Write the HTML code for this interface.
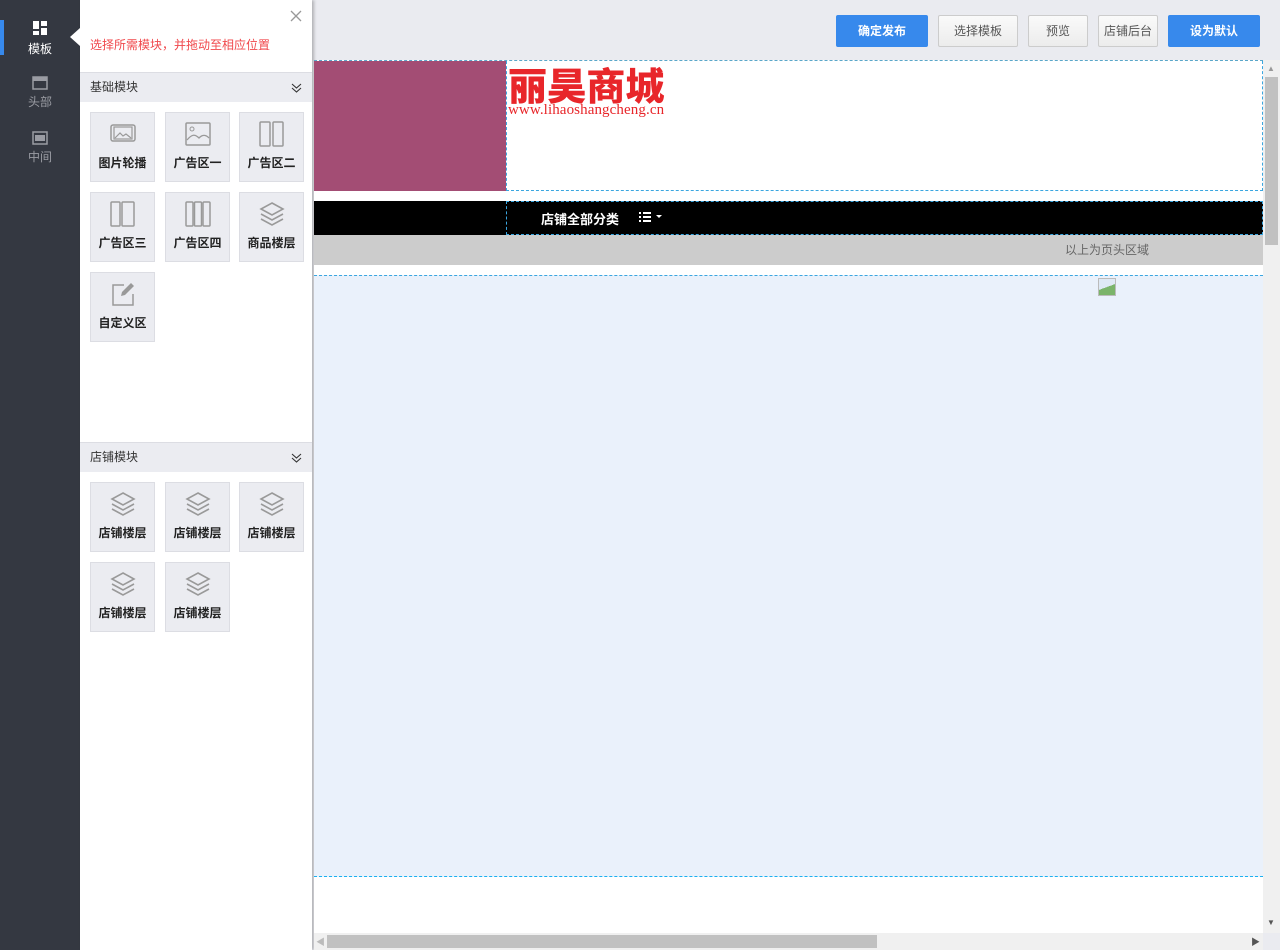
<!DOCTYPE html>
<html><head><meta charset="utf-8"><style>
*{margin:0;padding:0;box-sizing:border-box}
body{width:1280px;height:950px;overflow:hidden;position:relative;background:#eaebf0;font-family:"Liberation Sans","Noto Sans CJK SC",sans-serif;font-size:12px}
.abs{position:absolute}
#side{left:0;top:0;width:80px;height:950px;background:#343841}
.nav{position:absolute;left:0;width:80px;text-align:center;color:#9a9ca3;font-size:12px}
#panel{left:80px;top:0;width:232px;height:950px;background:#fff;box-shadow:2px 0 3px rgba(0,0,0,.25)}
.sh{position:absolute;left:0;width:232px;height:30px;background:#ebecf1;border-top:1px solid #dcdde3;line-height:29px;padding-left:10px;color:#333;font-size:12px}
.chev{position:absolute;right:10px;top:9px}
.tile{position:absolute;width:65px;height:70px;background:#ebecf1;border:1px solid #dcdde3;text-align:center;font-weight:bold;color:#222;font-size:12px}
.tile svg{position:absolute;left:18px;top:8px}
.tile span{position:absolute;left:0;right:0;top:41px}
.btn{position:absolute;top:15px;height:32px;line-height:30px;text-align:center;border-radius:2px;font-size:12px}
.blue{background:#3789ec;color:#fff;border:1px solid #3789ec;font-weight:bold}
.gray{background:linear-gradient(#fafafa,#ececec);border:1px solid #ccc;color:#555}
</style></head><body>
<div id="side" class="abs">
 <div class="abs" style="left:0;top:20px;width:4px;height:35px;background:#3789ec"></div>
 <div class="nav" style="top:20px;color:#fff"><svg width="16" height="16" viewBox="0 0 16 16" style="display:block;margin:0 auto 4px"><rect x="1" y="1" width="6" height="8" fill="#fff"/><rect x="9" y="1" width="6" height="5" fill="#fff"/><rect x="1" y="11" width="6" height="4" fill="#fff"/><rect x="9" y="8" width="6" height="7" fill="#fff"/></svg>模板</div>
 <div class="nav" style="top:76px"><svg width="16" height="14" viewBox="0 0 16 14" style="display:block;margin:0 auto 3px"><rect x="1" y="1" width="14" height="12" fill="none" stroke="#9a9ca3" stroke-width="1.5"/><rect x="1" y="1" width="14" height="4" fill="#9a9ca3"/></svg>头部</div>
 <div class="nav" style="top:131px"><svg width="16" height="14" viewBox="0 0 16 14" style="display:block;margin:0 auto 3px"><rect x="1" y="1" width="14" height="12" fill="none" stroke="#9a9ca3" stroke-width="1.5"/><rect x="3" y="4" width="10" height="6" fill="#9a9ca3"/></svg>中间</div>
</div>
<div id="panel" class="abs">
 <div class="abs" style="left:-10px;top:28px;width:0;height:0;border-top:9px solid transparent;border-bottom:9px solid transparent;border-right:10px solid #fff"></div>
 <svg class="abs" style="left:210px;top:10px" width="12" height="12" viewBox="0 0 12 12"><path d="M1 1L11 11M11 1L1 11" stroke="#999" stroke-width="1.3"/></svg>
 <div class="abs" style="left:10px;top:36px;color:#f0484c;font-size:12px">选择所需模块，并拖动至相应位置</div>
 <div class="sh" style="top:72px">基础模块<svg class="chev" width="11" height="12" viewBox="0 0 11 12"><path d="M1 2l4.5 4 4.5-4M1 6l4.5 4 4.5-4" fill="none" stroke="#333" stroke-width="1.1"/></svg></div>
 <div class="tile" style="left:10px;top:112px"><svg width="28" height="24" viewBox="0 0 28 24"><rect x="2" y="4" width="24" height="16" rx="2" fill="none" stroke="#999" stroke-width="1.5"/><rect x="5" y="6" width="18" height="12" fill="none" stroke="#999" stroke-width="1.2"/><path d="M6 17l5-5 3 3 3-2 5 4" fill="none" stroke="#999" stroke-width="1.2"/></svg><span>图片轮播</span></div>
 <div class="tile" style="left:85px;top:112px"><svg width="28" height="26" viewBox="0 0 28 26"><rect x="2" y="2" width="24" height="22" rx="1" fill="none" stroke="#999" stroke-width="1.5"/><circle cx="8" cy="8" r="2" fill="none" stroke="#999"/><path d="M3 19c5-6 8-6 12-2 4-4 7-3 10 0" fill="none" stroke="#999" stroke-width="1.3"/></svg><span>广告区一</span></div>
 <div class="tile" style="left:159px;top:112px"><svg width="28" height="26" viewBox="0 0 28 26"><rect x="2" y="1" width="10" height="24" rx="1" fill="none" stroke="#999" stroke-width="1.5"/><rect x="15" y="1" width="10" height="24" rx="1" fill="none" stroke="#999" stroke-width="1.5"/></svg><span>广告区二</span></div>
 <div class="tile" style="left:10px;top:192px"><svg width="28" height="26" viewBox="0 0 28 26"><rect x="2" y="1" width="9" height="24" rx="1" fill="none" stroke="#999" stroke-width="1.5"/><rect x="13" y="1" width="12" height="24" rx="1" fill="none" stroke="#999" stroke-width="1.5"/></svg><span>广告区三</span></div>
 <div class="tile" style="left:85px;top:192px"><svg width="28" height="26" viewBox="0 0 28 26"><rect x="2" y="1" width="7" height="24" rx="1" fill="none" stroke="#999" stroke-width="1.5"/><rect x="10.5" y="1" width="7" height="24" rx="1" fill="none" stroke="#999" stroke-width="1.5"/><rect x="19" y="1" width="7" height="24" rx="1" fill="none" stroke="#999" stroke-width="1.5"/></svg><span>广告区四</span></div>
 <div class="tile" style="left:159px;top:192px"><svg width="28" height="26" viewBox="0 0 28 26"><path d="M14 2L25 8 14 14 3 8z M3 13l11 6 11-6 M3 18l11 6 11-6" fill="none" stroke="#999" stroke-width="1.6"/></svg><span>商品楼层</span></div>
 <div class="tile" style="left:10px;top:272px"><svg width="28" height="26" viewBox="0 0 28 26"><path d="M15 4H4v20h20V13" fill="none" stroke="#999" stroke-width="1.5"/><path d="M22 2l3 3-9 9-4 1 1-4z" fill="#999"/></svg><span>自定义区</span></div>
 <div class="sh" style="top:442px">店铺模块<svg class="chev" width="11" height="12" viewBox="0 0 11 12"><path d="M1 2l4.5 4 4.5-4M1 6l4.5 4 4.5-4" fill="none" stroke="#333" stroke-width="1.1"/></svg></div>
 <div class="tile" style="left:10px;top:482px"><svg width="28" height="26" viewBox="0 0 28 26"><path d="M14 2L25 8 14 14 3 8z M3 13l11 6 11-6 M3 18l11 6 11-6" fill="none" stroke="#999" stroke-width="1.6"/></svg><span>店铺楼层</span></div>
 <div class="tile" style="left:85px;top:482px"><svg width="28" height="26" viewBox="0 0 28 26"><path d="M14 2L25 8 14 14 3 8z M3 13l11 6 11-6 M3 18l11 6 11-6" fill="none" stroke="#999" stroke-width="1.6"/></svg><span>店铺楼层</span></div>
 <div class="tile" style="left:159px;top:482px"><svg width="28" height="26" viewBox="0 0 28 26"><path d="M14 2L25 8 14 14 3 8z M3 13l11 6 11-6 M3 18l11 6 11-6" fill="none" stroke="#999" stroke-width="1.6"/></svg><span>店铺楼层</span></div>
 <div class="tile" style="left:10px;top:562px"><svg width="28" height="26" viewBox="0 0 28 26"><path d="M14 2L25 8 14 14 3 8z M3 13l11 6 11-6 M3 18l11 6 11-6" fill="none" stroke="#999" stroke-width="1.6"/></svg><span>店铺楼层</span></div>
 <div class="tile" style="left:85px;top:562px"><svg width="28" height="26" viewBox="0 0 28 26"><path d="M14 2L25 8 14 14 3 8z M3 13l11 6 11-6 M3 18l11 6 11-6" fill="none" stroke="#999" stroke-width="1.6"/></svg><span>店铺楼层</span></div>
</div>
<div class="btn blue" style="left:836px;width:92px">确定发布</div>
<div class="btn gray" style="left:938px;width:80px">选择模板</div>
<div class="btn gray" style="left:1028px;width:60px">预览</div>
<div class="btn gray" style="left:1098px;width:60px">店铺后台</div>
<div class="btn blue" style="left:1168px;width:92px">设为默认</div>
<div class="abs" style="left:314px;top:60px;width:949px;height:873px;background:#fff;border-top:1px dashed #5aa7c9"></div>
<div class="abs" style="left:314px;top:61px;width:192px;height:130px;background:#a34d74"></div>
<div class="abs" style="left:506px;top:61px;width:757px;height:130px;border:1px dashed #3aa6e0;border-top:none"></div>
<div class="abs" style="left:508px;top:60px;color:#e8262a;font-size:38px;font-weight:900;font-family:'Noto Sans CJK SC',sans-serif;line-height:48px;transform:scaleX(1.03);transform-origin:left">丽昊商城</div>
<div class="abs" style="left:508px;top:102px;color:#e8262a;font-size:15px;font-family:'Liberation Serif',serif;letter-spacing:0.1px">www.lihaoshangcheng.cn</div>
<div class="abs" style="left:314px;top:201px;width:949px;height:34px;background:#000"></div>
<div class="abs" style="left:506px;top:201px;width:757px;height:34px;border:1px dashed #3aa6e0"></div>
<div class="abs" style="left:541px;top:209px;color:#fff;font-size:13px;font-weight:bold">店铺全部分类</div>
<svg class="abs" style="left:639px;top:212px" width="24" height="11" viewBox="0 0 24 11"><g fill="#fff"><rect x="0" y="0" width="2" height="2"/><rect x="0" y="4" width="2" height="2"/><rect x="0" y="8" width="2" height="2"/><rect x="4" y="0" width="8" height="2"/><rect x="4" y="4" width="8" height="2"/><rect x="4" y="8" width="8" height="2"/><path d="M17 3h6l-3 3z"/></g></svg>
<div class="abs" style="left:314px;top:235px;width:949px;height:30px;background:#cccccc;color:#666;line-height:30px;padding-left:751px">以上为页头区域</div>
<div class="abs" style="left:314px;top:275px;width:949px;height:602px;background:#eaf1fb;border-top:1px dashed #3aa6e0;border-bottom:1px dashed #1ab0f0"></div>
<div class="abs" style="left:1098px;top:278px;width:18px;height:18px;border:1px solid #bbb;background:linear-gradient(160deg,#dfe9f5 50%,#7bb46a 50%)"></div>
<div class="abs" style="left:1263px;top:60px;width:17px;height:873px;background:#f0f0f0"></div>
<div class="abs" style="left:1265px;top:77px;width:13px;height:168px;background:#c1c1c1"></div>
<div class="abs" style="left:1267px;top:64px;color:#999;font-size:8px">▲</div>
<div class="abs" style="left:1267px;top:918px;color:#555;font-size:8px">▼</div>
<div class="abs" style="left:314px;top:933px;width:949px;height:17px;background:#f0f0f0"></div>
<div class="abs" style="left:327px;top:935px;width:550px;height:13px;background:#c1c1c1"></div>
<div class="abs" style="left:1251px;top:935px;color:#555;font-size:9px">▶</div>
<div class="abs" style="left:316px;top:935px;color:#bbb;font-size:9px">◀</div>
</body></html>
